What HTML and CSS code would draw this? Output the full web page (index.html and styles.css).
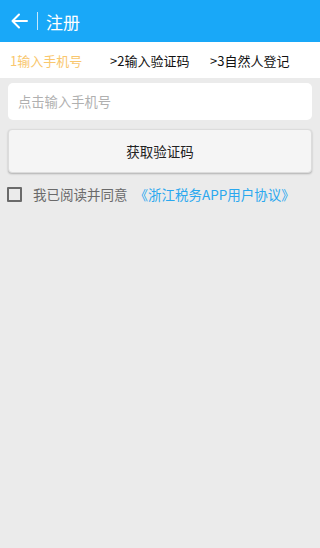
FILE: index.html
```html
<!DOCTYPE html>
<html lang="zh">
<head>
<meta charset="utf-8">
<title>注册</title>
<link rel="stylesheet" href="styles.css">
</head>
<body>
<header class="topbar">
  <svg class="back" width="18" height="16" viewBox="0 0 18 16">
    <path d="M9 1.5 L2.5 8 L9 14.5 M2.5 8 H17" fill="none" stroke="#fff" stroke-width="2" stroke-linecap="round" stroke-linejoin="round"/>
  </svg>
  <span class="sep"></span>
  <h1 class="title">注册</h1>
</header>
<nav class="steps">
  <span class="step active">1输入手机号</span>
  <span class="step">&gt;2输入验证码</span>
  <span class="step">&gt;3自然人登记</span>
</nav>
<main class="content">
  <div class="field">点击输入手机号</div>
  <button class="btn">获取验证码</button>
  <label class="agree">
    <span class="box"></span>
    <span class="agree-text">我已阅读并同意</span>
    <span class="link">《浙江税务APP用户协议》</span>
  </label>
</main>
</body>
</html>
```
FILE: styles.css
```css
html, body {
  margin: 0;
  padding: 0;
}
body {
  width: 320px;
  height: 548px;
  background: #ebebeb;
  font-family: "Noto Sans CJK SC", "Roboto", sans-serif;
  overflow: hidden;
}
.topbar {
  height: 42px;
  background: #19a8f8;
  display: flex;
  align-items: center;
  padding-left: 10px;
  box-sizing: border-box;
}
.back {
  display: block;
}
.sep {
  width: 1px;
  height: 18px;
  background: rgba(255,255,255,0.75);
  margin-left: 9px;
}
.title {
  margin: 0 0 0 8px;
  font-size: 17px;
  font-weight: normal;
  color: #fff;
  line-height: 1;
}
.steps {
  height: 36px;
  background: #fff;
  display: flex;
  align-items: center;
  padding-left: 10px;
  box-sizing: border-box;
  font-size: 13px;
  color: #111;
}
.step {
  width: 100px;
  white-space: nowrap;
}
.step.active {
  color: #f9c76e;
}
.content {
  padding: 5px 8px 0 8px;
}
.field {
  height: 37px;
  background: #fff;
  border-radius: 5px;
  box-sizing: border-box;
  padding-left: 10px;
  display: flex;
  align-items: center;
  font-size: 13.3px;
  color: #b0b0b0;
}
.btn {
  display: block;
  width: 100%;
  height: 44px;
  margin-top: 9px;
  background: #f5f5f5;
  border: 1px solid #dcdcdc;
  border-radius: 4px;
  box-shadow: 0 1px 2px rgba(0,0,0,0.25);
  font-family: inherit;
  font-size: 13.5px;
  color: #222;
  padding: 0;
}
.agree {
  display: flex;
  align-items: center;
  margin-top: 11px;
  margin-left: -1px;
  font-size: 13.5px;
}
.box {
  width: 15px;
  height: 15px;
  border: 2px solid #6a6a6a;
  box-sizing: border-box;
  border-radius: 1px;
}
.agree-text {
  margin-left: 11px;
  color: #6a6a6a;
}
.link {
  margin-left: 7px;
  color: #2aa8ef;
}
```
